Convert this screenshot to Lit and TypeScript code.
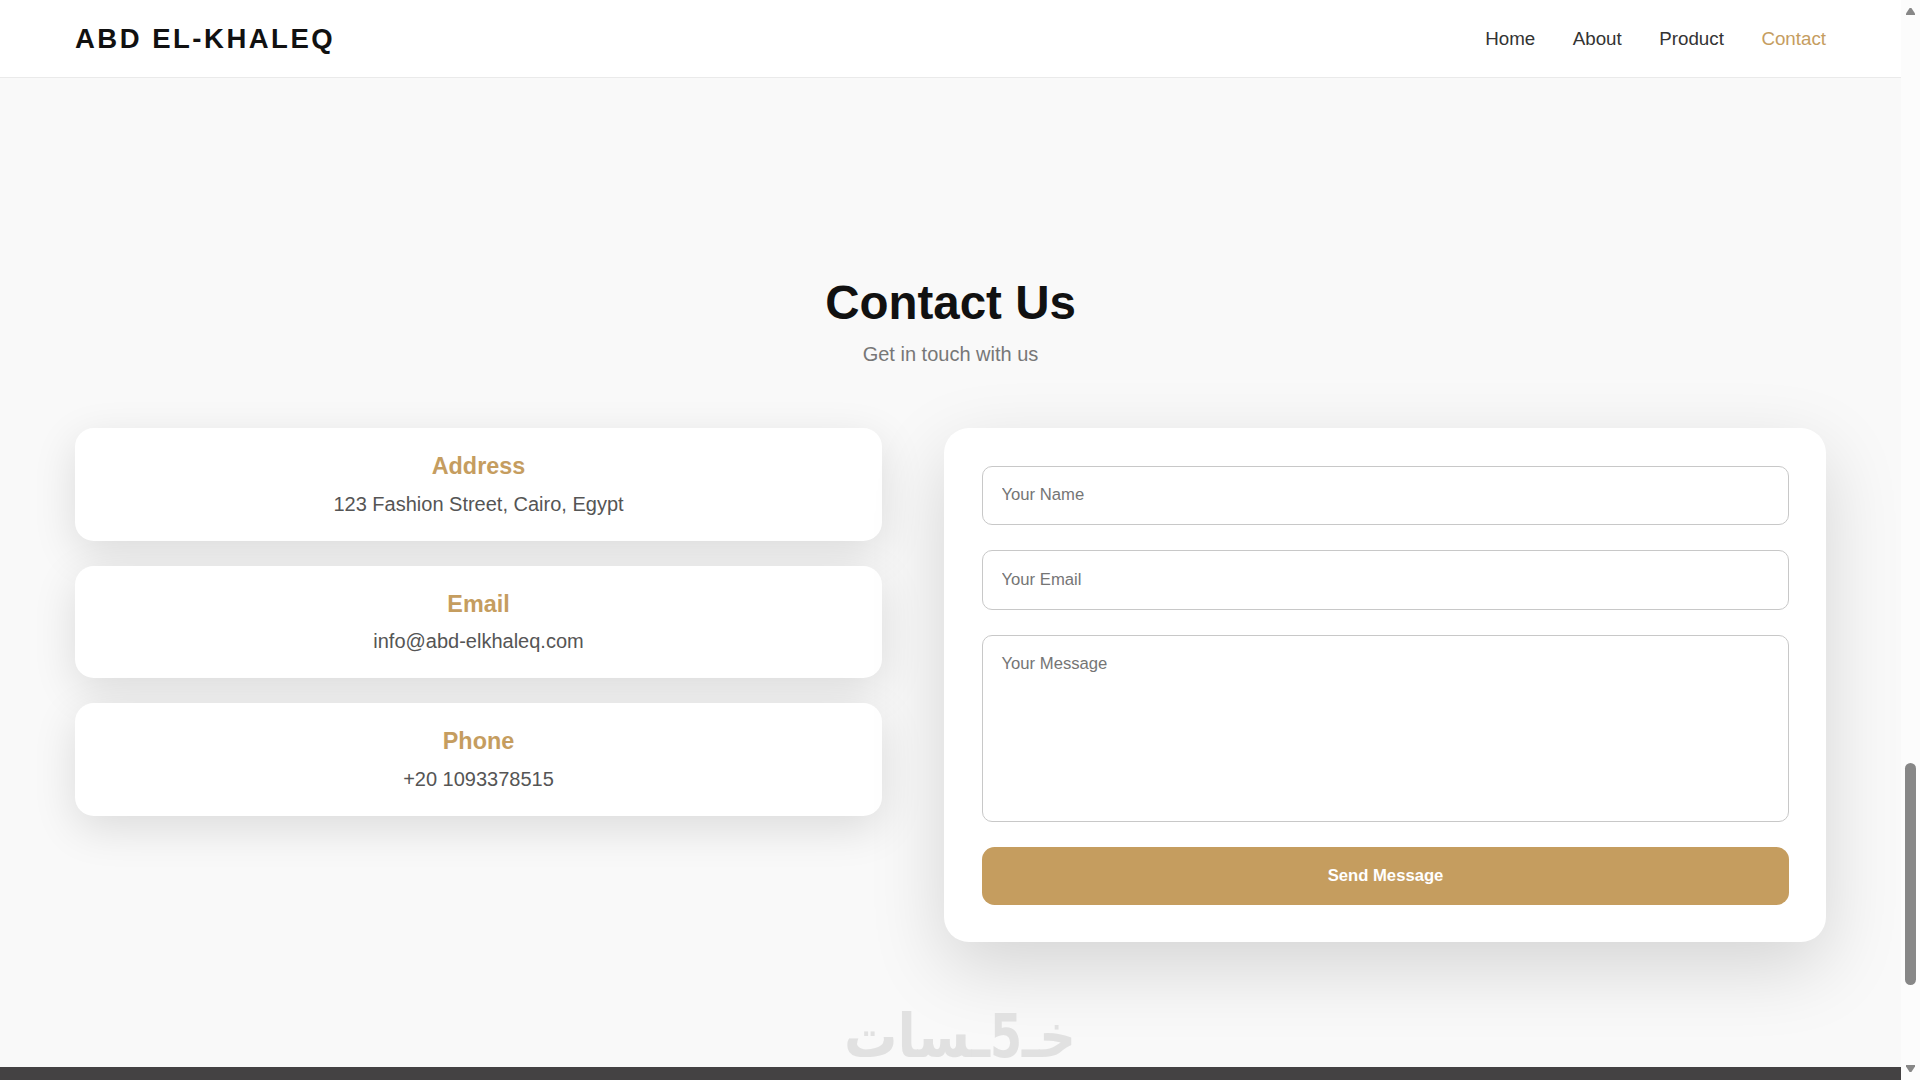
import { LitElement, html, css, TemplateResult } from 'lit';
import { customElement, property } from 'lit/decorators.js';
import { classMap } from 'lit/directives/class-map.js';

interface ContactItem {
  title: string;
  value: string;
}

const NAV_LINKS = ['Home', 'About', 'Product', 'Contact'];

const CONTACT_ITEMS: ContactItem[] = [
  { title: 'Address', value: '123 Fashion Street, Cairo, Egypt' },
  { title: 'Email', value: 'info@abd-elkhaleq.com' },
  { title: 'Phone', value: '+20 1093378515' },
];

@customElement('site-header')
export class SiteHeader extends LitElement {
  @property()
  active = 'Contact';

  static styles = css`
    :host {
      display: block;
    }

    .bar {
      display: flex;
      align-items: center;
      justify-content: space-between;
      box-sizing: border-box;
      height: 78px;
      padding: 0 75px;
      background: #fff;
      border-bottom: 1px solid #eaeaea;
    }

    .logo {
      color: #111;
      font-size: 27.5px;
      font-weight: 700;
      letter-spacing: 2.5px;
    }

    .nav {
      display: flex;
      gap: 37.5px;
    }

    .link {
      color: #333;
      font-size: 18.75px;
      text-decoration: none;
    }

    .link.active {
      color: #c59d5f;
    }
  `;

  render(): TemplateResult {
    return html`
      <header class="bar">
        <div class="logo">ABD EL-KHALEQ</div>
        <nav class="nav">
          ${NAV_LINKS.map(
            (name) => html`<a class=${classMap({ link: true, active: name === this.active })}>${name}</a>`
          )}
        </nav>
      </header>
    `;
  }
}

@customElement('contact-card')
export class ContactCard extends LitElement {
  @property()
  heading = '';

  @property()
  value = '';

  static styles = css`
    :host {
      display: block;
    }

    .card {
      box-sizing: border-box;
      height: 112.5px;
      padding: 25px;
      border-radius: 18.75px;
      background: #fff;
      box-shadow: 0 12.5px 43.75px rgba(0, 0, 0, 0.12);
      text-align: center;
    }

    .title {
      margin: 0 0 12.5px;
      color: #c59d5f;
      font-size: 23.4px;
      line-height: 27px;
    }

    .value {
      margin: 0;
      color: #555;
      font-size: 20px;
      line-height: 23px;
    }
  `;

  render(): TemplateResult {
    return html`
      <div class="card">
        <h3 class="title">${this.heading}</h3>
        <p class="value">${this.value}</p>
      </div>
    `;
  }
}

@customElement('contact-form')
export class ContactForm extends LitElement {
  static styles = css`
    :host {
      display: block;
    }

    .form {
      display: flex;
      flex-direction: column;
      gap: 25px;
      padding: 38px 37px 37px 38px;
      border-radius: 25px;
      background: #fff;
      box-shadow: 0 25px 75px rgba(0, 0, 0, 0.15);
    }

    .field {
      box-sizing: border-box;
      width: 100%;
      height: 59px;
      padding: 17.75px 18.5px 18.75px;
      border: 1px solid #c8c8c8;
      border-radius: 10px;
      background: #fff;
      font-family: inherit;
      font-size: 16.667px;
      outline: none;
    }

    .field::placeholder {
      color: #757575;
    }

    .email {
      height: 60px;
    }

    .message {
      height: 187px;
      resize: none;
    }

    .submit {
      height: 58px;
      border: 0;
      border-radius: 12.5px;
      background: #c59d5f;
      color: #fff;
      font-family: inherit;
      font-size: 16.667px;
      font-weight: 700;
    }
  `;

  render(): TemplateResult {
    return html`
      <form class="form">
        <input class="field" type="text" placeholder="Your Name" />
        <input class="field email" type="email" placeholder="Your Email" />
        <textarea class="field message" placeholder="Your Message"></textarea>
        <button class="submit" type="button">Send Message</button>
      </form>
    `;
  }
}

@customElement('page-scrollbar')
export class PageScrollbar extends LitElement {
  static styles = css`
    :host {
      display: flex;
      flex-direction: column;
      align-items: center;
      box-sizing: border-box;
      width: 19px;
      padding: 8px 0;
      background: #fcfcfc;
    }

    .arrow {
      display: block;
      width: 9px;
      height: 7px;
      fill: #878787;
    }

    .track {
      flex: 1;
      padding-top: 748px;
    }

    .thumb {
      width: 11px;
      height: 222px;
      border-radius: 5.5px;
      background: #878787;
    }
  `;

  render(): TemplateResult {
    return html`
      <svg class="arrow" viewBox="0 0 9 7"><path d="M3.6 0h1.8L9 5.5V7H0V5.5z"></path></svg>
      <div class="track"><div class="thumb"></div></div>
      <svg class="arrow" viewBox="0 0 9 7"><path d="M3.6 7h1.8L9 1.5V0H0v1.5z"></path></svg>
    `;
  }
}

@customElement('app-root')
export class AppRoot extends LitElement {
  static styles = css`
    :host {
      position: relative;
      display: flex;
      width: 1920px;
      height: 1080px;
      overflow: hidden;
      font-family: 'Liberation Sans', Arial, sans-serif;
    }

    .page {
      display: flex;
      flex-direction: column;
      width: 1901px;
      background: #f9f9f9;
    }

    .contact {
      flex: 1;
      padding: 196px 75px 0;
    }

    .heading {
      margin: 0 0 11px;
      color: #111;
      font-size: 47.5px;
      line-height: 57px;
      text-align: center;
    }

    .subtitle {
      margin: 0 0 62px;
      color: #777;
      font-size: 20px;
      line-height: 24px;
      text-align: center;
    }

    .columns {
      display: grid;
      grid-template-columns: 807px 882px;
      column-gap: 62px;
      align-items: start;
    }

    .cards {
      display: grid;
      gap: 25px;
    }

    .footer {
      height: 13px;
      background: #444243;
    }

    /* floats over the page, like a stamp */
    .watermark {
      position: absolute;
      left: 843px;
      top: 1010px;
      width: 234px;
      height: 50px;
      overflow: visible;
      fill: #e1e1e1;
      font-family: 'DejaVu Sans', sans-serif;
      font-size: 50px;
      font-weight: 700;
    }
  `;

  renderWatermark(): TemplateResult {
    // the digit five stands in for the letter meem
    return html`
      <svg class="watermark" viewBox="0 0 234 50">
        <g transform="translate(0 47) scale(1 1.2)">
          <text x="1" y="0" textLength="146" lengthAdjust="spacingAndGlyphs">ـسات</text>
          <text x="147" y="0" textLength="32" lengthAdjust="spacingAndGlyphs">5</text>
          <text x="179" y="0" textLength="54" lengthAdjust="spacingAndGlyphs">خـ</text>
        </g>
      </svg>
    `;
  }

  render(): TemplateResult {
    return html`
      <div class="page">
        <site-header active="Contact"></site-header>
        <main class="contact">
          <h2 class="heading">Contact Us</h2>
          <p class="subtitle">Get in touch with us</p>
          <div class="columns">
            <div class="cards">
              ${CONTACT_ITEMS.map(
                (item) => html`<contact-card .heading=${item.title} .value=${item.value}></contact-card>`
              )}
            </div>
            <contact-form></contact-form>
          </div>
        </main>
        <footer class="footer"></footer>
      </div>
      <page-scrollbar></page-scrollbar>
      ${this.renderWatermark()}
    `;
  }
}
